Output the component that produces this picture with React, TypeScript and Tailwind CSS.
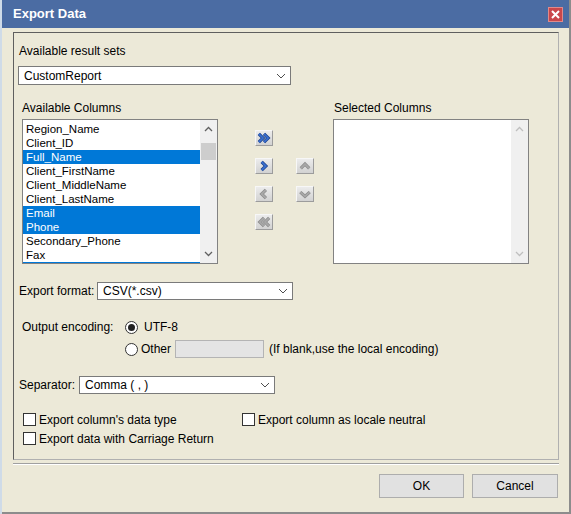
import React from "react";

const availableColumns = [
  { name: "Region_Name", selected: false },
  { name: "Client_ID", selected: false },
  { name: "Full_Name", selected: true },
  { name: "Client_FirstName", selected: false },
  { name: "Client_MiddleName", selected: false },
  { name: "Client_LastName", selected: false },
  { name: "Email", selected: true },
  { name: "Phone", selected: true },
  { name: "Secondary_Phone", selected: false },
  { name: "Fax", selected: false },
];

function DropChevron() {
  return (
    <svg width="10" height="6" viewBox="0 0 10 6" className="shrink-0">
      <polyline points="1,1 5,5 9,1" fill="none" stroke="#4d4d4d" strokeWidth="1" />
    </svg>
  );
}

function Dropdown({ value, width }: { value: string; width: string }) {
  return (
    <div
      className={`${width} flex h-full items-center justify-between border border-[#7a7a7a] bg-white pl-[5px] pr-[4px] text-[12px] leading-[14px] text-black`}
    >
      <span>{value}</span>
      <DropChevron />
    </div>
  );
}

type ArrowKind = "all-right" | "right" | "left" | "all-left" | "up" | "down";

function ArrowButton({ kind, enabled }: { kind: ArrowKind; enabled?: boolean }) {
  const main = enabled ? "#3a6fd0" : "#a8a8a8";
  const edge = enabled ? "#1a3f88" : "#8c8c8c";
  const shapes: Record<ArrowKind, string[]> = {
    "all-right": ["3,3.5 7.5,8 3,12.5", "8.5,3.5 13,8 8.5,12.5"],
    right: ["6,3.5 10.5,8 6,12.5"],
    left: ["10.5,3.5 6,8 10.5,12.5"],
    "all-left": ["8.5,3.5 4,8 8.5,12.5", "14,3.5 9.5,8 14,12.5"],
    up: ["4,10.5 8.5,6 13,10.5"],
    down: ["3.5,6 8.5,10.5 13.5,6"],
  };
  return (
    <div className="flex h-[16px] w-[18px] items-center justify-center border border-b-[#9c9c9c] border-l-[#f7f7f7] border-r-[#9c9c9c] border-t-[#f7f7f7] bg-gradient-to-b from-[#ececec] to-[#d2d2d2]">
      <svg width="17" height="16" viewBox="0 0 17 16">
        {shapes[kind].map((p) => (
          <g key={p}>
            <polyline points={p} fill="none" stroke={edge} strokeWidth="3.4" strokeLinejoin="miter" />
            <polyline points={p} fill="none" stroke={main} strokeWidth="1.9" strokeLinejoin="miter" />
          </g>
        ))}
      </svg>
    </div>
  );
}

function ScrollChevron({ dir, color }: { dir: "up" | "down"; color: string }) {
  return (
    <svg width="9" height="6" viewBox="0 0 9 6">
      <polyline
        points={dir === "up" ? "1,5 4.5,1.5 8,5" : "1,1 4.5,4.5 8,1"}
        fill="none"
        stroke={color}
        strokeWidth="1.3"
      />
    </svg>
  );
}

function Radio({ checked }: { checked?: boolean }) {
  return (
    <div className="flex h-[13px] w-[13px] shrink-0 items-center justify-center rounded-full border border-[#333333] bg-white">
      {checked ? <div className="h-[7px] w-[7px] rounded-full bg-[#222222]" /> : null}
    </div>
  );
}

function Checkbox({ label }: { label: string }) {
  return (
    <div className="flex h-[13px] items-center gap-[3px]">
      <div className="h-[13px] w-[13px] shrink-0 border border-[#333333] bg-white" />
      <span className="whitespace-nowrap text-[12px] leading-[14px]">{label}</span>
    </div>
  );
}

export default function App() {
  return (
    <div className="flex h-[514px] w-[571px] overflow-hidden bg-[#cfdbe8] pl-[2px] font-['Liberation_Sans',Arial,sans-serif] text-black">
      <div className="flex h-[514px] w-[569px] flex-col border-b-2 border-r-2 border-[#8c8c8c] bg-[#ece9d8]">
        {/* title bar */}
        <div className="flex h-[28px] shrink-0 items-center justify-between bg-[#4b6ca3] pl-[11px] pr-[6px]">
          <span className="text-[13px] font-bold leading-[16px] text-white">Export Data</span>
          <div className="flex h-[15px] w-[15px] items-center justify-center border border-[#e08a8a] bg-[#c9474b]">
            <svg width="9" height="9" viewBox="0 0 9 9">
              <path d="M1 1 L8 8 M8 1 L1 8" stroke="white" strokeWidth="2" />
            </svg>
          </div>
        </div>

        {/* group box */}
        <div className="ml-[11px] mt-[4px] h-[428px] w-[546px] border border-b-[#b0b0b0] border-l-[#5f5f5f] border-r-[#b0b0b0] border-t-[#5f5f5f] pl-[4px] pt-[11px]">
          <div className="pl-[1px] text-[12px] leading-[14px]">Available result sets</div>
          <div className="mt-[8px] h-[19px]">
            <Dropdown value="CustomReport" width="w-[273px]" />
          </div>

          <div className="mt-[16px] flex">
            {/* available columns */}
            <div className="ml-[4px] w-[196px]">
              <div className="text-[12px] leading-[14px]">Available Columns</div>
              <div className="mt-[4px] flex h-[145px] border border-[#828282] bg-white">
                <div className="min-w-0 flex-1 overflow-hidden pt-[2px]">
                  {availableColumns.map((c) => (
                    <div
                      key={c.name}
                      className={`h-[14px] pl-[3px] text-[11.5px] leading-[14px] ${
                        c.selected ? "bg-[#0078d7] text-white" : "text-black"
                      }`}
                    >
                      {c.name}
                    </div>
                  ))}
                  {/* next selected row, scrolled just out of view */}
                  <div className="h-[14px] bg-[#0078d7]" />
                </div>
                <div className="flex w-[17px] shrink-0 flex-col items-center bg-[#f0f0f0] pt-[6px]">
                  <ScrollChevron dir="up" color="#606060" />
                  <div className="mt-[11px] h-[17px] w-[15px] bg-[#cdcdcd]" />
                  <div className="flex-1" />
                  <div className="pb-[6px]">
                    <ScrollChevron dir="down" color="#606060" />
                  </div>
                </div>
              </div>
            </div>

            {/* move buttons */}
            <div className="ml-[37px] flex w-[78px] flex-col gap-[12px] pt-[29px]">
              <div className="flex">
                <ArrowButton kind="all-right" enabled />
              </div>
              <div className="flex gap-[23px]">
                <ArrowButton kind="right" enabled />
                <ArrowButton kind="up" />
              </div>
              <div className="flex gap-[23px]">
                <ArrowButton kind="left" />
                <ArrowButton kind="down" />
              </div>
              <div className="flex">
                <ArrowButton kind="all-left" />
              </div>
            </div>

            {/* selected columns */}
            <div className="w-[196px]">
              <div className="pl-[1px] text-[12px] leading-[14px]">Selected Columns</div>
              <div className="mt-[4px] flex h-[145px] border border-[#828282] bg-white">
                <div className="flex-1" />
                <div className="flex w-[17px] shrink-0 flex-col items-center justify-between bg-[#f0f0f0] py-[6px]">
                  <ScrollChevron dir="up" color="#bfbfbf" />
                  <ScrollChevron dir="down" color="#bfbfbf" />
                </div>
              </div>
            </div>
          </div>

          {/* export format */}
          <div className="mt-[18px] flex h-[18px] items-center">
            <span className="w-[79px] pl-[1px] text-[12px] leading-[14px]">Export format:</span>
            <Dropdown value="CSV(*.csv)" width="w-[196px]" />
          </div>

          {/* output encoding */}
          <div className="mt-[20px] flex h-[14px] items-center">
            <span className="w-[107px] pl-[4px] text-[12px] leading-[14px]">Output encoding:</span>
            <Radio checked />
            <span className="ml-[6px] text-[12px] leading-[14px]">UTF-8</span>
          </div>
          <div className="mt-[6px] flex h-[18px] items-center pl-[107px]">
            <Radio />
            <span className="ml-[3px] w-[34px] text-[12px] leading-[14px]">Other</span>
            <div className="h-[18px] w-[89px] border border-[#b4b4b4] bg-[#e4e4e4]" />
            <span className="ml-[5px] whitespace-nowrap text-[12px] leading-[14px]">
              (If blank,use the local encoding)
            </span>
          </div>

          {/* separator */}
          <div className="mt-[18px] flex h-[18px] items-center">
            <span className="w-[61px] pl-[1px] text-[12px] leading-[14px]">Separator:</span>
            <Dropdown value="Comma ( , )" width="w-[196px]" />
          </div>

          {/* options */}
          <div className="ml-[5px] mt-[19px] grid grid-cols-[219px_1fr] gap-y-[6px]">
            <Checkbox label="Export column's data type" />
            <Checkbox label="Export column as locale neutral" />
            <Checkbox label="Export data with Carriage Return" />
          </div>
        </div>

        {/* divider */}
        <div className="ml-[11px] mt-[3px] w-[546px] border-b border-t border-b-white border-t-[#a0a0a0]" />

        {/* footer buttons */}
        <div className="mt-[9px] flex gap-[8px] pl-[377px]">
          <button className="h-[24px] w-[85px] border border-[#adadad] bg-[#e1e1e1] text-[12px] leading-[14px] text-black">
            OK
          </button>
          <button className="h-[24px] w-[86px] border border-[#adadad] bg-[#e1e1e1] text-[12px] leading-[14px] text-black">
            Cancel
          </button>
        </div>
      </div>
    </div>
  );
}
